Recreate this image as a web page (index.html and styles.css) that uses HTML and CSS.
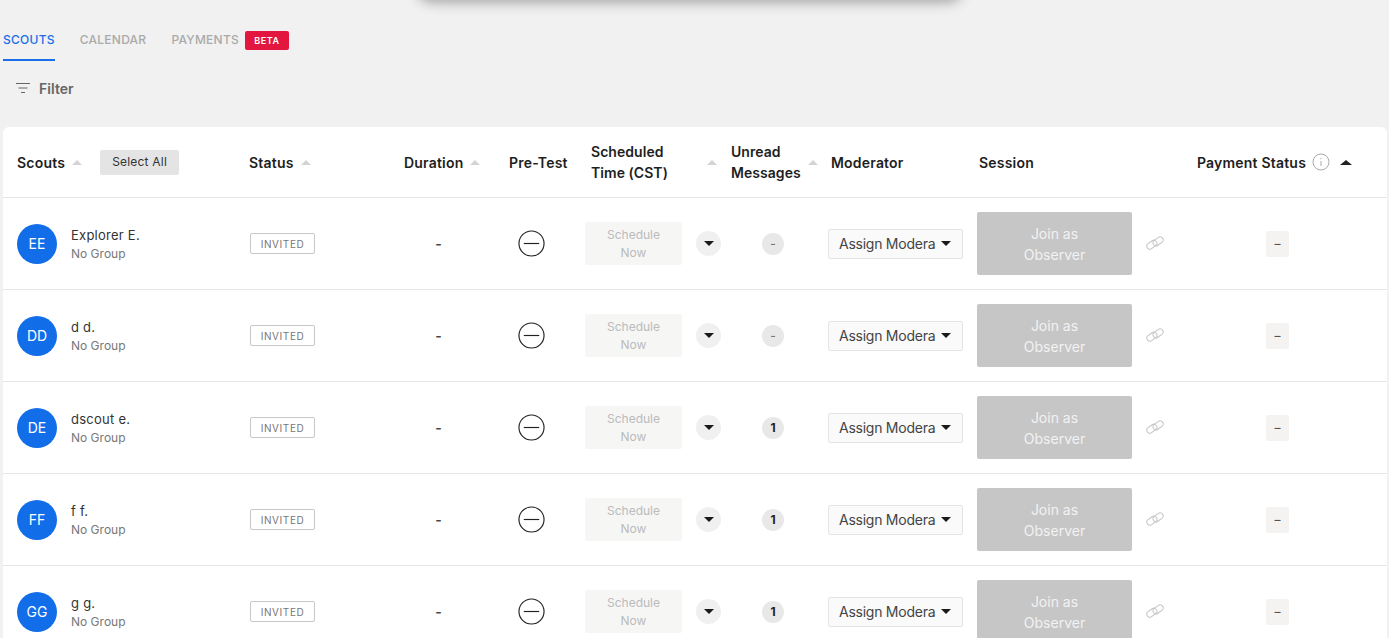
FILE: index.html
```html
<!DOCTYPE html>
<html lang="en">
<head>
<meta charset="utf-8">
<title>Scouts</title>
<link rel="stylesheet" href="styles.css">
</head>
<body>
<div class="top-modal"></div>
<nav class="tabs">
  <a class="tab active">SCOUTS</a>
  <a class="tab">CALENDAR</a>
  <a class="tab">PAYMENTS</a>
  <span class="beta">BETA</span>
</nav>
<div class="filter">
  <svg class="filter-icon" width="14" height="12" viewBox="0 0 14 12"><path d="M0 1.5h14M2.5 6h9M5 10.5h4" stroke="#666" stroke-width="1.1" fill="none"/></svg>
  <span>Filter</span>
</div>
<section class="card">
  <div class="grid head">
    <div class="h h-scouts"><span>Scouts</span><i class="sort"></i><button class="select-all">Select All</button></div>
    <div class="h"><span>Status</span><i class="sort"></i></div>
    <div class="h"><span>Duration</span><i class="sort"></i></div>
    <div class="h h-pre"><span>Pre-Test</span></div>
    <div class="h h-sched"><span class="h-wrap">Scheduled Time (CST)</span><i class="sort"></i></div>
    <div class="h h-unread"><span class="h-wrap">Unread Messages</span><i class="sort"></i></div>
    <div class="h h-mod"><span>Moderator</span></div>
    <div class="h h-session"><span>Session</span></div>
    <div class="h"><span>Payment Status</span>
      <svg class="info" width="18" height="18" viewBox="0 0 18 18"><circle cx="9" cy="9" r="8" fill="none" stroke="#aaa" stroke-width="1"/><path d="M9 8v5M9 5v1.2" stroke="#aaa" stroke-width="1" fill="none"/></svg>
      <i class="sort dark"></i></div>
  </div>

  <div class="grid row">
    <div class="who"><span class="avatar">EE</span><div><div class="name">Explorer E.</div><div class="group">No Group</div></div></div>
    <div><span class="status">INVITED</span></div>
    <div class="dur">-</div>
    <div class="pre"><svg width="28" height="28" viewBox="0 0 28 28"><circle cx="14" cy="14" r="13" fill="none" stroke="#222" stroke-width="1.2"/><path d="M6 14h16" stroke="#222" stroke-width="1.2"/></svg></div>
    <div class="sched"><span class="sched-btn">Schedule Now</span><span class="round"><i class="caret"></i></span></div>
    <div class="unread"><span class="count none">-</span></div>
    <div><span class="mod"><span class="mod-text">Assign Modera</span><i class="caret"></i></span></div>
    <div class="session"><span class="join">Join as Observer</span><svg class="link" width="18" height="14" viewBox="0 0 18 14"><g fill="none" stroke="#c4c4c4" stroke-width="1" transform="rotate(-36 9 7)"><rect x="0" y="3.5" width="11" height="6" rx="3"/><rect x="7" y="4.5" width="11" height="6" rx="3"/></g></svg></div>
    <div class="pay"><span class="pay-chip">–</span></div>
  </div>

  <div class="grid row">
    <div class="who"><span class="avatar">DD</span><div><div class="name">d d.</div><div class="group">No Group</div></div></div>
    <div><span class="status">INVITED</span></div>
    <div class="dur">-</div>
    <div class="pre"><svg width="28" height="28" viewBox="0 0 28 28"><circle cx="14" cy="14" r="13" fill="none" stroke="#222" stroke-width="1.2"/><path d="M6 14h16" stroke="#222" stroke-width="1.2"/></svg></div>
    <div class="sched"><span class="sched-btn">Schedule Now</span><span class="round"><i class="caret"></i></span></div>
    <div class="unread"><span class="count none">-</span></div>
    <div><span class="mod"><span class="mod-text">Assign Modera</span><i class="caret"></i></span></div>
    <div class="session"><span class="join">Join as Observer</span><svg class="link" width="18" height="14" viewBox="0 0 18 14"><g fill="none" stroke="#c4c4c4" stroke-width="1" transform="rotate(-36 9 7)"><rect x="0" y="3.5" width="11" height="6" rx="3"/><rect x="7" y="4.5" width="11" height="6" rx="3"/></g></svg></div>
    <div class="pay"><span class="pay-chip">–</span></div>
  </div>

  <div class="grid row">
    <div class="who"><span class="avatar">DE</span><div><div class="name">dscout e.</div><div class="group">No Group</div></div></div>
    <div><span class="status">INVITED</span></div>
    <div class="dur">-</div>
    <div class="pre"><svg width="28" height="28" viewBox="0 0 28 28"><circle cx="14" cy="14" r="13" fill="none" stroke="#222" stroke-width="1.2"/><path d="M6 14h16" stroke="#222" stroke-width="1.2"/></svg></div>
    <div class="sched"><span class="sched-btn">Schedule Now</span><span class="round"><i class="caret"></i></span></div>
    <div class="unread"><span class="count">1</span></div>
    <div><span class="mod"><span class="mod-text">Assign Modera</span><i class="caret"></i></span></div>
    <div class="session"><span class="join">Join as Observer</span><svg class="link" width="18" height="14" viewBox="0 0 18 14"><g fill="none" stroke="#c4c4c4" stroke-width="1" transform="rotate(-36 9 7)"><rect x="0" y="3.5" width="11" height="6" rx="3"/><rect x="7" y="4.5" width="11" height="6" rx="3"/></g></svg></div>
    <div class="pay"><span class="pay-chip">–</span></div>
  </div>

  <div class="grid row">
    <div class="who"><span class="avatar">FF</span><div><div class="name">f f.</div><div class="group">No Group</div></div></div>
    <div><span class="status">INVITED</span></div>
    <div class="dur">-</div>
    <div class="pre"><svg width="28" height="28" viewBox="0 0 28 28"><circle cx="14" cy="14" r="13" fill="none" stroke="#222" stroke-width="1.2"/><path d="M6 14h16" stroke="#222" stroke-width="1.2"/></svg></div>
    <div class="sched"><span class="sched-btn">Schedule Now</span><span class="round"><i class="caret"></i></span></div>
    <div class="unread"><span class="count">1</span></div>
    <div><span class="mod"><span class="mod-text">Assign Modera</span><i class="caret"></i></span></div>
    <div class="session"><span class="join">Join as Observer</span><svg class="link" width="18" height="14" viewBox="0 0 18 14"><g fill="none" stroke="#c4c4c4" stroke-width="1" transform="rotate(-36 9 7)"><rect x="0" y="3.5" width="11" height="6" rx="3"/><rect x="7" y="4.5" width="11" height="6" rx="3"/></g></svg></div>
    <div class="pay"><span class="pay-chip">–</span></div>
  </div>

  <div class="grid row">
    <div class="who"><span class="avatar">GG</span><div><div class="name">g g.</div><div class="group">No Group</div></div></div>
    <div><span class="status">INVITED</span></div>
    <div class="dur">-</div>
    <div class="pre"><svg width="28" height="28" viewBox="0 0 28 28"><circle cx="14" cy="14" r="13" fill="none" stroke="#222" stroke-width="1.2"/><path d="M6 14h16" stroke="#222" stroke-width="1.2"/></svg></div>
    <div class="sched"><span class="sched-btn">Schedule Now</span><span class="round"><i class="caret"></i></span></div>
    <div class="unread"><span class="count">1</span></div>
    <div><span class="mod"><span class="mod-text">Assign Modera</span><i class="caret"></i></span></div>
    <div class="session"><span class="join">Join as Observer</span><svg class="link" width="18" height="14" viewBox="0 0 18 14"><g fill="none" stroke="#c4c4c4" stroke-width="1" transform="rotate(-36 9 7)"><rect x="0" y="3.5" width="11" height="6" rx="3"/><rect x="7" y="4.5" width="11" height="6" rx="3"/></g></svg></div>
    <div class="pay"><span class="pay-chip">–</span></div>
  </div>
</section>
</body>
</html>
```
FILE: styles.css
```css
* { box-sizing: border-box; }
html, body { height: 100%; }
body {
  margin: 0;
  height: 638px;
  overflow: hidden;
  position: relative;
  background: #f0f1f0;
  font-family: Inter, "Liberation Sans", sans-serif;
  color: #222;
}
.top-modal {
  position: absolute;
  left: 422px;
  top: -40px;
  width: 536px;
  height: 38px;
  background: #888;
  box-shadow: 0 0 12px 5px rgba(70, 70, 70, .42);
  border-radius: 10px;
}
.tabs {
  display: flex;
  align-items: flex-start;
  height: 61px;
  padding: 33px 0 0 3px;
  font-size: 12px;
  letter-spacing: .25px;
}
.tab { color: #aaa; margin-right: 25px; height: 28px; font-weight: 500; line-height: 14px; }
.tab:nth-child(3) { margin-right: 6px; }
.tab.active { color: #1a6ee8; border-bottom: 2px solid #1a6ee8; }
.beta {
  margin-top: -2px;
  width: 44px;
  height: 19px;
  background: #e3163f;
  border-radius: 2px;
  color: #fff;
  font-size: 9px;
  font-weight: 600;
  letter-spacing: .6px;
  text-align: center;
  line-height: 20px;
}
.filter {
  display: flex;
  align-items: center;
  gap: 9px;
  height: 54px;
  padding: 0 0 0 16px;
  font-size: 14px;
  font-weight: 600;
  letter-spacing: .05px;
  color: #666;
}
.card {
  margin: 12px 2px 0 3px;
  background: #fff;
  border-radius: 6px 6px 0 0;
}
.grid {
  display: grid;
  grid-template-columns: 246px 155px 104px 77px 142px 101px 149px 220px 190px;
  align-items: center;
  border-bottom: 1px solid #e6e6e6;
}
.head { height: 71px; font-size: 14px; font-weight: 600; line-height: 21px; letter-spacing: .2px; color: #1e1e1e; }
.row { height: 92px; font-size: 14px; }
.h { display: flex; align-items: center; }
.h-scouts, .who { padding-left: 14px; }
.h-pre { padding-left: 1px; }
.h-sched { padding-left: 6px; }
.h-unread { padding-left: 4px; }
.h-mod { padding-left: 3px; }
.h-session { padding-left: 2px; }
.h-wrap { width: 100px; letter-spacing: .05px; }
.h-unread .h-wrap { width: 76px; }
.sort {
  display: inline-block;
  width: 0;
  height: 0;
  margin-left: 7px;
  border-left: 5px solid transparent;
  border-right: 5px solid transparent;
  border-bottom: 5px solid #d4d4d4;
}
.sort.dark { border-bottom-color: #222; margin-left: 10px; border-left-width: 6px; border-right-width: 6px; }
.h-sched .sort { margin-left: 16px; }
.h-unread .sort { margin-left: 1px; }
.select-all {
  margin-left: 18px;
  width: 79px;
  height: 25px;
  border: 0;
  border-radius: 2px;
  background: #e4e4e4;
  color: #333;
  font: 400 12px Inter, "Liberation Sans", sans-serif;
  letter-spacing: .2px;
  padding: 0 0 2px;
}
.info { margin-left: 6px; }
.who { display: flex; align-items: center; gap: 14px; }
.avatar {
  width: 40px;
  height: 40px;
  border-radius: 50%;
  background: #126de8;
  color: #fff;
  font-size: 14px;
  display: flex;
  align-items: center;
  justify-content: center;
}
.name { font-size: 13px; line-height: 18px; padding-top: 2px; letter-spacing: .25px; color: #333; }
.group { font-size: 12px; line-height: 18px; padding-top: 1px; color: #777; }
.status {
  display: inline-block;
  margin-left: 1px;
  width: 65px;
  height: 21px;
  border: 1px solid #c8c8c8;
  border-radius: 2px;
  color: #777;
  font-size: 10px;
  letter-spacing: .6px;
  text-align: center;
  line-height: 20px;
}
.dur { text-align: center; padding-right: 35px; color: #444; font-weight: 600; }
.pre { display: flex; padding-left: 10px; }
.pre svg { width: 27px; height: 27px; }
.sched { display: flex; align-items: center; }
.sched-btn {
  width: 97px;
  height: 43px;
  background: #f6f6f5;
  border-radius: 2px;
  color: #bbb;
  font-size: 12px;
  line-height: 18px;
  text-align: center;
  padding: 4px 20px;
}
.round {
  margin-left: 14px;
  width: 25px;
  height: 25px;
  border-radius: 50%;
  background: #f0f0f0;
  display: flex;
  align-items: center;
  justify-content: center;
}
.caret {
  flex: none;
  width: 0;
  height: 0;
  border-left: 5px solid transparent;
  border-right: 5px solid transparent;
  border-top: 5px solid #1a1a1a;
}
.unread { display: flex; padding-left: 35px; }
.count {
  width: 22px;
  height: 22px;
  border-radius: 50%;
  background: #e8e8e8;
  color: #222;
  font-size: 12px;
  font-weight: 700;
  display: flex;
  align-items: center;
  justify-content: center;
}
.count.none { color: #777; font-weight: 500; }
.mod {
  display: flex;
  align-items: center;
  width: 135px;
  height: 30px;
  padding: 0 10px;
  background: #fafafa;
  border: 1px solid #e4e4e4;
  border-radius: 2px;
  color: #444;
}
.mod-text { width: 96px; white-space: nowrap; flex: none; letter-spacing: -.25px; }
.mod .caret { margin-left: 6px; }
.session { display: flex; align-items: center; }
.join {
  width: 155px;
  height: 63px;
  background: #c6c6c6;
  border-radius: 2px;
  color: #f2f2f2;
  font-size: 14px;
  line-height: 21px;
  text-align: center;
  padding: 11px 40px;
}
.link { margin-left: 14px; margin-top: -1px; overflow: visible; }
.pay { display: flex; padding-left: 69px; }
.pay-chip {
  width: 23px;
  height: 26px;
  background: #f5f3f2;
  border-radius: 2px;
  color: #555;
  font-size: 12px;
  font-weight: 500;
  display: flex;
  align-items: center;
  justify-content: center;
}
```
